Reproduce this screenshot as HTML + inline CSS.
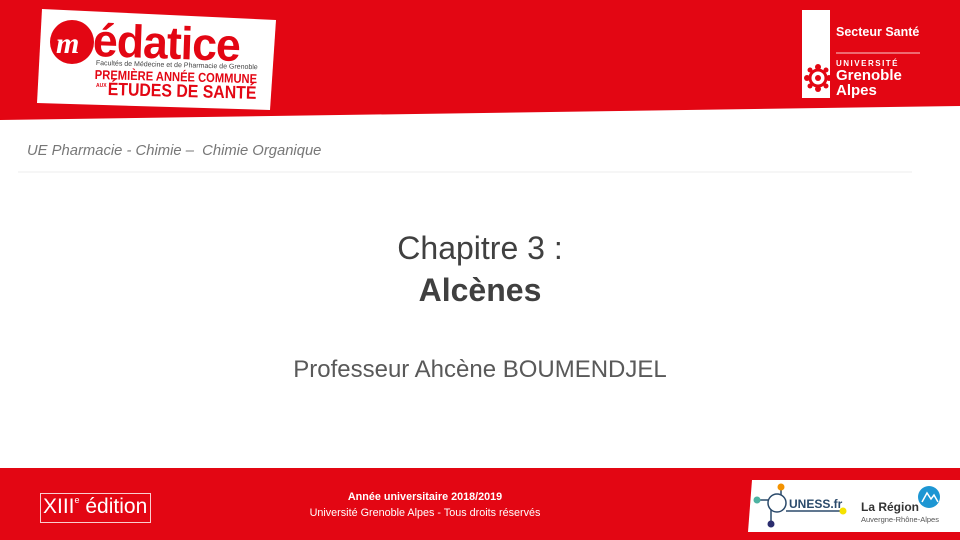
<!DOCTYPE html>
<html><head><meta charset="utf-8"><style>
*{margin:0;padding:0;box-sizing:border-box}
body{width:960px;height:540px;position:relative;overflow:hidden;background:#fff;font-family:"Liberation Sans",sans-serif}
.abs{position:absolute}
</style></head><body>
<svg class="abs" style="left:0;top:0" width="960" height="540">
<polygon points="0,0 960,0 960,106 0,120" fill="#e30613"/>
<rect x="0" y="468" width="960" height="72" fill="#e30613"/>
<polygon points="42,9 276,20 270,110 37,103" fill="#fff"/>
<rect x="802" y="10" width="28" height="88" fill="#fff"/>
<line x1="836" y1="53" x2="920" y2="53" stroke="#fff" stroke-width="1" opacity=".8"/>
<polygon points="752,480 960,480 960,532 748,532" fill="#fff"/>
<line x1="18" y1="172" x2="912" y2="172" stroke="#eee" stroke-width="1"/>
<rect x="40.5" y="493.5" width="110" height="29" fill="none" stroke="#fff" stroke-width="1" opacity=".8"/>
<circle cx="72" cy="42" r="22" fill="#e30613"/>
<text x="56" y="53" font-family="Liberation Serif" font-style="italic" font-weight="bold" font-size="30" fill="#fff">m</text>
<g transform="translate(818,78)" fill="#e30613">
<circle r="8" fill="none" stroke="#e30613" stroke-width="3"/><circle r="3"/>
<circle cx="0" cy="-11" r="3"/><circle cx="0" cy="11" r="3"/><circle cx="-11" cy="0" r="3"/><circle cx="11" cy="0" r="3"/>
<circle cx="8" cy="8" r="2.5"/><circle cx="-8" cy="8" r="2.5"/><circle cx="8" cy="-8" r="2.5"/><circle cx="-8" cy="-8" r="2.5"/>
</g>
<g>
<line x1="757" y1="500" x2="770" y2="500" stroke="#2b4a6b" stroke-width="1.5"/>
<line x1="781" y1="487" x2="781" y2="496" stroke="#2b4a6b" stroke-width="1.5"/>
<line x1="771" y1="510" x2="771" y2="522" stroke="#2b4a6b" stroke-width="1.5"/>
<line x1="786" y1="511" x2="842" y2="511" stroke="#2b4a6b" stroke-width="1.5"/>
<circle cx="777" cy="503" r="9" fill="#fff" stroke="#2b4a6b" stroke-width="1.5"/>
<circle cx="757" cy="500" r="3.5" fill="#4db3a2"/>
<circle cx="781" cy="487" r="3.5" fill="#f39200"/>
<circle cx="771" cy="524" r="3.5" fill="#2b2d6e"/>
<circle cx="843" cy="511" r="3.5" fill="#f5e200"/>
<circle cx="929" cy="497" r="11" fill="#1d96d3"/>
<polyline points="922,502 927,493 931,499 934,495 938,502" fill="none" stroke="#fff" stroke-width="1.5"/>
</g>
</svg>
<div class="abs" style="left:94px;top:13px;font-size:46px;font-weight:bold;color:#e30613;letter-spacing:-1px;transform:rotate(2deg) scaleX(0.97);transform-origin:0 0;white-space:nowrap">édatice</div>
<div class="abs" style="left:96px;top:60px;font-size:7px;color:#444;white-space:nowrap;transform:rotate(1.5deg);transform-origin:0 0">Facultés de Médecine et de Pharmacie de Grenoble</div>
<div class="abs" style="left:95px;top:67px;font-size:13px;font-weight:bold;color:#e30613;white-space:nowrap;transform:rotate(1.5deg) scaleX(0.86);transform-origin:0 0">PREMIÈRE ANNÉE COMMUNE</div>
<div class="abs" style="left:108px;top:79px;font-size:18px;font-weight:bold;color:#e30613;white-space:nowrap;transform:rotate(1.5deg) scaleX(0.88);transform-origin:0 0">ÉTUDES DE SANTÉ</div>
<div class="abs" style="left:96px;top:84px;font-size:5px;font-weight:bold;color:#e30613;line-height:5px;width:8px">AUX</div>
<div class="abs" style="left:836px;top:25px;font-size:12.5px;font-weight:bold;color:#fff">Secteur Santé</div>
<div class="abs" style="left:836px;top:59px;font-size:8px;font-weight:bold;color:#fff;letter-spacing:1.5px">UNIVERSITÉ</div>
<div class="abs" style="left:836px;top:68px;font-size:15px;font-weight:bold;color:#fff;line-height:15px">Grenoble<br>Alpes</div>
<div class="abs" style="left:27px;top:143px;font-size:14.8px;font-style:italic;color:#777;white-space:nowrap">UE Pharmacie - Chimie –&nbsp; Chimie Organique</div>
<div class="abs" style="left:0;width:960px;top:227px;text-align:center;font-size:32px;color:#404040;line-height:42px">Chapitre 3 :<br><b>Alcènes</b></div>
<div class="abs" style="left:0;width:960px;top:356px;text-align:center;font-size:24px;color:#595959">Professeur Ahcène BOUMENDJEL</div>
<div class="abs" style="left:43px;top:495px;font-size:21px;color:#fff;white-space:nowrap">XIII<sup style="font-size:9px;vertical-align:10px">e</sup> édition</div>
<div class="abs" style="left:225px;width:400px;top:489px;text-align:center;font-size:10.8px;color:#fff;line-height:16px;white-space:nowrap"><b>Année universitaire 2018/2019</b><br>Université Grenoble Alpes - Tous droits réservés</div>
<div class="abs" style="left:789px;top:497px;font-size:12px;font-weight:bold;color:#2b4a6b">UNESS.fr</div>
<div class="abs" style="left:861px;top:500px;font-size:12px;font-weight:bold;color:#333">La Région</div>
<div class="abs" style="left:861px;top:515px;font-size:7.5px;color:#555;white-space:nowrap">Auvergne-Rhône-Alpes</div>
</body></html>
